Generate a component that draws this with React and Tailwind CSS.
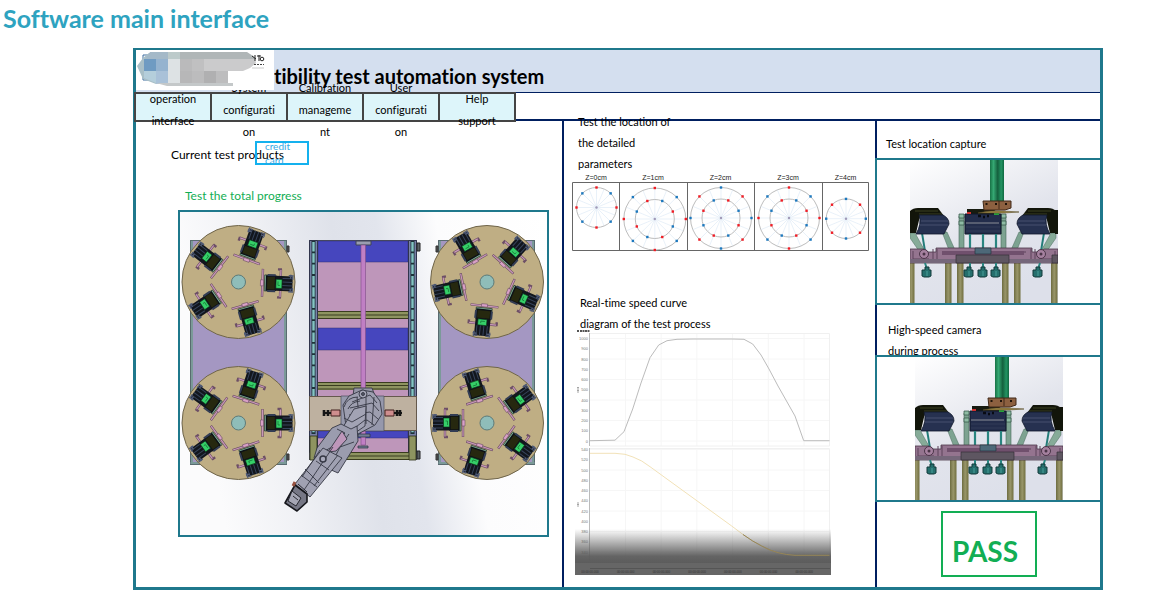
import React from "react";

const menuItems = [
  ["operation", "interface"],
  ["System", "configurati", "on"],
  ["Calibration", "manageme", "nt"],
  ["User", "configurati", "on"],
  ["Help", "support"],
];

const turntables = [
  { x: 238.5, y: 282, offset: 2 },
  { x: 487, y: 282, offset: 24 },
  { x: 238.5, y: 423, offset: 0 },
  { x: 487, y: 423, offset: 36 },
];

const dials = [
  { label: "Z=0cm", labelX: 596, x: 596.5, y: 207.5, rings: [{ r: 20, start: 0, first: "red" }] },
  {
    label: "Z=1cm",
    labelX: 653,
    x: 654.8,
    y: 219,
    rings: [
      { r: 31, start: 0, first: "red" },
      { r: 19.5, start: 22.5, first: "blue" },
    ],
  },
  {
    label: "Z=2cm",
    labelX: 720.5,
    x: 721,
    y: 218,
    rings: [
      { r: 30.5, start: 0, first: "blue" },
      { r: 19, start: 22.5, first: "red" },
    ],
  },
  {
    label: "Z=3cm",
    labelX: 788,
    x: 789,
    y: 218,
    rings: [
      { r: 30.5, start: 0, first: "red" },
      { r: 19, start: 22.5, first: "blue" },
    ],
  },
  { label: "Z=4cm", labelX: 845.5, x: 846, y: 218.7, rings: [{ r: 19.8, start: 0, first: "blue" }] },
];

const polar = (x, y, r, deg) => {
  const rad = (deg * Math.PI) / 180;
  return [x + r * Math.cos(rad), y + r * Math.sin(rad)];
};

const Logo = () => (
  <svg viewBox="136 51 138 40" className="relative z-10 h-10 w-[138px] shrink-0 bg-white">
    <path d="M148 56h-5v5M143 75v6h7" fill="none" stroke="#3d6d9e" />
    <path d="M137 67L143 59L149 54H156V85L143 80Z" fill="#a9bfc7" />
    <path d="M144 60h12v12h-12z" fill="#6f9bc2" />
    <path d="M144 72h12v12l-12-5z" fill="#b4cedb" />
    <path d="M150 53h18v7h-23z" fill="#a4b9c8" />
    <path d="M156 60h12v12h-12z" fill="#95b3cf" />
    <path d="M156 72h12v13h-12z" fill="#a9c1d8" />
    <path d="M168 53h12v7h-12z" fill="#bccaca" />
    <path d="M168 60h12v24h-12z" fill="#dde2e4" />
    <path d="M180 53h67l6 4 2 3h-75z" fill="#b0b6b7" />
    <path d="M180 60h12v12h-12z" fill="#bababb" />
    <path d="M192 60h12v12h-12z" fill="#c0c0c1" />
    <path d="M204 60h51l1 4-6 5-7 3h-39z" fill="#cbcbcc" />
    <path d="M180 72h12v12h-12z" fill="#b7b7b8" />
    <path d="M192 72h12v12h-12z" fill="#bcbcbd" />
    <path d="M204 72h12v12h-12z" fill="#b0b0b1" />
    <path d="M216 72h12v12h-12z" fill="#bdbdbe" />
    <path d="M156 84h77v3h-66z" fill="#c4c8c9" />
    <path d="M252 57l4 3M255 56v6M257 57h4M259 56v6" stroke="#222" fill="none" />
    <circle cx="262" cy="60" r="1.800" stroke="#222" fill="none" />
    <path d="M254 65.500h10" stroke="#444" strokeDasharray="2 1" />
    <path d="M252 69h12" stroke="#ccc" />
  </svg>
);

const Fixture = () => (
  <g>
    <path d="M24 -14V14M42 -14V14M39 -14h4M39 14h4" stroke="#6d4f66" strokeWidth="2.4" />
    <path d="M24 -13.5V13.5M42 -13.5V13.5" stroke="#c898b8" strokeWidth="1.2" />
    <path d="M22 -3h3v6h-3z" fill="#d8a0c6" stroke="#5d4458" strokeWidth=".5" />
    <path d="M26 -8h4v16h-4z" fill="#7fae98" stroke="#23352d" strokeWidth=".7" />
    <path d="M28 -7h9v14h-9z" fill="#26280f" stroke="#0c1016" strokeWidth="1.400" />
    <path d="M29 -8h8M29 8h8" stroke="#333d54" strokeWidth="2" />
    <path d="M37 -7.500h17v15h-17z" fill="#12161d" />
    <path d="M37.500 -4h6v9h-6z" fill="#35cf68" stroke="#0c3218" strokeWidth=".6" />
    <path d="M39.500 -2v4h2" stroke="#136b30" strokeWidth=".7" fill="none" />
    <path d="M44 -5h9M44 -1.500h10M44 2h10M44 5.500h9" stroke="#36435a" strokeWidth="1" />
    <path d="M52 -9v4M54 -7v3M52 9v-4M54 7v-3M50 -8h5M50 8h5" stroke="#4d5874" strokeWidth="1.500" />
  </g>
);

const Turntable = ({ x, y, offset }) => (
  <g>
    <circle cx={x} cy={y} r="56.500" fill="#bfae84" stroke="#6f654b" />
    {[0, 1, 2, 3, 4].map((index) => (
      <g key={index} transform={`translate(${x} ${y}) rotate(${offset + index * 72})`}>
        <Fixture />
      </g>
    ))}
    <circle cx={x} cy={y} r="7" fill="#8fbdb9" stroke="#5c7a78" />
  </g>
);

const Machine = () => (
  <g>
    <rect x="309.500" y="240.500" width="107" height="219" fill="#be96ba" stroke="#4c4e5c" />
    <path d="M318 241h90v21h-90zM318 328h90v22h-90zM318 431h90v7h-90z" fill="#4646be" stroke="#33336f" strokeWidth=".5" />
    <path d="M318 311h90v8h-90zM318 382h90v8h-90zM310 452h106v8h-106z" fill="#8e9460" />
    <path
      d="M318 311.500h90M318 315h90M318 318.500h90M318 382.500h90M318 385.500h90M318 389h90M310 452.500h106M310 456h106M310 459.500h106"
      stroke="#25270f"
      strokeWidth=".8"
    />
    <path d="M309.500 240.500h8v212h-8zM408.500 240.500h8v212h-8z" fill="#777fa6" stroke="#30344c" />
    <path d="M313.500 241v193M412.500 241v193" stroke="#1d3238" strokeWidth="4" />
    <path d="M313.500 242v192M412.500 242v192" stroke="#84c4c4" strokeWidth="2.400" strokeDasharray="9.500 1.800" />
    <path d="M310 436h7v24h-7zM409 436h7v24h-7z" fill="#8e9460" stroke="#2b2d14" strokeWidth=".8" />
    <path d="M417 243h3v8h-3zM417 451h3v8h-3z" fill="#5b6166" stroke="#222" />
    <path d="M356 241h15v4h-15z" fill="#999db0" stroke="#3f4254" />
    <path d="M361 245h4.500v200h-4.500z" fill="#c07fc4" stroke="#7e4c86" strokeWidth=".6" />
    <path d="M309.500 396.500h107v34h-107z" fill="#beb1a0" stroke="#65594c" />
    <path d="M341 396h43v35h-43z" fill="#9698ac" stroke="#4c4e5c" strokeWidth=".7" />
    <path d="M331 410h9v6h-9zM385 410h9v6h-9z" fill="#cf8e8e" stroke="#42211f" />
    <path d="M324 410v6M328 410v6M397 410v6M400 410v6" stroke="#151515" strokeWidth="2.600" />
    <path d="M324 413h7M394 413h8" stroke="#151515" strokeWidth="2" />
    <path d="M358 434h12v3h-12zM358 446h10v2h-10z" fill="#737b96" stroke="#25333a" strokeWidth=".7" />
  </g>
);

const RobotArm = () => (
  <g stroke="#363844" strokeWidth=".9" strokeLinejoin="round">
    <path d="M354 388h18l3 8h-22z" fill="#9596a7" />
    <path d="M343 405l6-9 13-6 11 2 7 9 2 13-7 11-17 9-12-8z" fill="#9d9eaf" />
    <path d="M344 407q3-10 14-10M348 409q3-7 12-8" fill="none" />
    <path d="M352 402l18-7 7 8M350 408l22-5 7 8M349 415l21-3 8 7M354 424l13-4 7 5" fill="none" />
    <path d="M366 394v30M374 397l-2 28M357 397l3 29" fill="none" />
    <circle cx="363" cy="394" r="4" fill="#a4a5b5" />
    <circle cx="363" cy="394" r="1.500" fill="#555868" />
    <path d="M354 409l12-3-1 20-13 9-12-3z" fill="#a2a3b4" />
    <path d="M344 418l8 4 14-8M344 427l8 3 13-10" fill="none" />
    <path d="M332 428l9-4 10 5 6-3 1 15-20 32-9-4 5-12-13 7-7-6 3-10z" fill="#9b9cae" />
    <path d="M337 429l8 4-13 14-11 6M349 434l-9 13 14-5M340 447l-9 18" fill="none" />
    <path d="M342 431l5 8-11 12-8 1z" fill="#be96ba" />
    <path d="M323 448l19 10-32 39-15-13z" fill="#a0a1b2" />
    <path d="M333 447l-29 43M316 461l13 9M305 469l14 14M338 455l-24 31M320 450l-18 27M301 475l16 12" fill="none" />
    <circle cx="323" cy="459" r="3" fill="#a9aabb" strokeWidth="1.500" />
    <path d="M295 485l12 9v8l-10 9-12-8z" fill="#767785" stroke="#15161b" strokeWidth="1.600" />
    <path d="M292 491l9 7-5 8-8-5zM298 484l9 8M293 496l5 4" fill="#a5a6b4" stroke="#1b1c22" />
    <path d="M295 482l-2 4" stroke="#96503f" strokeWidth="3" />
  </g>
);

const ProgressDrawing = () => (
  <svg viewBox="180 212 367 323" className="block w-full">
    <defs>
      <linearGradient id="floor" x1="0" y1="0.15" x2="1" y2="0">
        <stop offset="0" stopColor="#fbfbfc" />
        <stop offset=".2" stopColor="#f0f1f5" />
        <stop offset=".42" stopColor="#dfe2ea" />
        <stop offset=".54" stopColor="#e2e5ed" />
        <stop offset=".7" stopColor="#fcfcfd" />
        <stop offset="1" stopColor="#ffffff" />
      </linearGradient>
    </defs>
    <rect x="180" y="212" width="367" height="323" fill="url(#floor)" />
    {[190.5, 438.5].map((x) => (
      <g key={x}>
        <rect x={x} y="240.500" width="96" height="224" fill="#a497c2" stroke="#596b70" />
        <path d={`M${x + 1.500} 241v223M${x + 94.500} 241v223M${x} 463h96`} stroke="#7b9a99" strokeWidth="2" />
      </g>
    ))}
    <path d="M287 246h2v6h-2zM287 454h2v6h-2zM436 246h2v6h-2zM436 454h2v6h-2z" fill="#555" stroke="#333" />
    <Machine />
    {turntables.map((table) => (
      <Turntable key={`${table.x}-${table.y}`} {...table} />
    ))}
    <RobotArm />
  </svg>
);

const Dial = ({ x, y, rings }) => (
  <g>
    {Array.from({ length: 16 }).map((_, index) => {
      const [endX, endY] = polar(x, y, rings[0].r, index * 22.5);
      return <line key={index} x1={x} y1={y} x2={endX} y2={endY} stroke="#e3eef8" strokeWidth=".8" />;
    })}
    {rings.map((ring) => (
      <g key={ring.r}>
        <circle cx={x} cy={y} r={ring.r} fill="none" stroke="#bdbdbd" />
        {Array.from({ length: 8 }).map((_, index) => {
          const [dotX, dotY] = polar(x, y, ring.r, ring.start - 90 + index * 45);
          const isRed = (index % 2 === 0) === (ring.first === "red");
          return (
            <rect
              key={index}
              x={dotX - 1.2}
              y={dotY - 1.2}
              width="2.400"
              height="2.400"
              fill={isRed ? "#f01c24" : "#1c78be"}
            />
          );
        })}
      </g>
    ))}
    <circle cx={x} cy={y} r="1.200" fill="#a09ab8" />
  </g>
);

const LocationDials = () => (
  <svg viewBox="572 172 298 80" className="block w-full">
    <path
      d="M572.500 182.500h296v68h-296zM619.500 182v69M687.500 182v69M754.500 182v69M822.500 182v69"
      fill="none"
      stroke="#666"
    />
    {dials.map((dial) => (
      <g key={dial.label}>
        <text x={dial.labelX} y="180" textAnchor="middle" fill="#222" className="font-['Liberation_Sans'] text-[7px]">
          {dial.label}
        </text>
        <Dial {...dial} />
      </g>
    ))}
  </svg>
);

const SpeedChart = () => (
  <svg viewBox="575 328 256 247" className="block w-full font-['Liberation_Sans'] text-[4px]">
    <defs>
      <linearGradient id="shade" x1="0" y1="0" x2="0" y2="1">
        <stop offset="0" stopColor="#5c5c5c" stopOpacity="0" />
        <stop offset=".3" stopColor="#5c5c5c" stopOpacity=".35" />
        <stop offset=".8" stopColor="#5c5c5c" stopOpacity=".95" />
        <stop offset="1" stopColor="#5c5c5c" />
      </linearGradient>
    </defs>
    <path d="M577 331h2M580 331h10" stroke="#555" strokeWidth="2" strokeDasharray="2 .5" />
    {Array.from({ length: 11 }).map((_, index) => (
      <g key={index} fill="#777" textAnchor="end">
        <text x="588" y={340 + index * 10.25}>{1000 - index * 100}</text>
        <text x="588" y={451 + index * 10.25}>{540 - index * 20}</text>
        {index % 2 === 0 && (
          <path
            d={`M590 ${338.5 + index * 10.25}h240M590 ${449.5 + index * 10.25}h240`}
            stroke="#f6f6f6"
          />
        )}
      </g>
    ))}
    {Array.from({ length: 6 }).map((_, index) => (
      <path key={index} d={`M${625.5 + index * 35.7} 334v112M${625.5 + index * 35.7} 449v111`} stroke="#f6f6f6" />
    ))}
    <path d="M590 333.500h239.500v112.500h-239.500M590 448.500h239.500v112h-239.500" fill="none" stroke="#f0f0f0" />
    <path d="M589.500 333v113M589.500 448v113" stroke="#bbb" />
    <path d="M578 387v6M578 502.500v4" stroke="#888" strokeWidth="1.500" strokeDasharray="1 .5" />
    <path
      d="M590 440.700L615 440.200L624 431.700L632.700 409L641 383L650 357.700L658.700 345L667 340.700L677 339.300L693 339H732L744 339.300L752.700 344L761 355L769 369L778 386L795 416L803.700 440.700H829.500"
      fill="none"
      stroke="#bcbcbc"
    />
    <path
      d="M590 453.300H615L625 454.300L633 457L641.700 461L650 466.700L731.700 526L743 534.500L752.700 541L761.700 546L770 550L778 552.700L786.700 554.500L795 555.300H829.500"
      fill="none"
      stroke="#f2e2b8"
    />
    <rect x="575" y="529" width="256" height="34" fill="url(#shade)" />
    <rect x="575" y="563" width="256" height="12" fill="#666" />
    <path d="M743 534.500L752.700 541L761.700 546L770 550L778 552.700L786.700 554.500L795 555.300H829.500" fill="none" stroke="#978657" />
    <path d="M590 568.500h240" stroke="#555" />
    {Array.from({ length: 7 }).map((_, index) => (
      <text key={index} x={590 + index * 35.7} y="573" textAnchor="middle" fill="#333" className="text-[3px]">
        00:00:00.000
      </text>
    ))}
  </svg>
);

const SideReader = () => (
  <g>
    <path d="M32 72h5l8 18h-6z" fill="#7da391" stroke="#4b6b5c" strokeWidth=".5" />
    <path d="M0 73h5l10 18h-6L0 78z" fill="#86ab98" stroke="#4b6b5c" strokeWidth=".5" />
    <path d="M11 73h2l3 18h-2z" fill="#237c78" />
    <path d="M0 51q3-3 8-3h20l6 8H10L6 73H0z" fill="#12150a" />
    <path d="M5 51h23M9 54h23" stroke="#3a4020" />
    <path d="M9 55h24q6 3 6 9l-5 10H6q6-10 3-19z" fill="#263150" stroke="#10182b" strokeWidth=".8" />
    <path d="M11 61h27M10 65h28" stroke="#46506e" strokeWidth="1.200" />
  </g>
);

const CameraView = ({ id }) => (
  <svg viewBox="0 0 148 143" className="block w-[148px]">
    <defs>
      <linearGradient id={`${id}-wall`} x1="0" y1="0" x2=".5" y2="1">
        <stop offset="0" stopColor="#fff" />
        <stop offset=".6" stopColor="#e2e4ec" />
        <stop offset="1" stopColor="#dde0ea" />
      </linearGradient>
      <linearGradient id={`${id}-pipe`}>
        <stop offset="0" stopColor="#177245" />
        <stop offset=".25" stopColor="#35a873" />
        <stop offset=".55" stopColor="#14603d" />
        <stop offset=".8" stopColor="#239463" />
        <stop offset="1" stopColor="#0f6840" />
      </linearGradient>
      <linearGradient id={`${id}-post`}>
        <stop offset="0" stopColor="#6d6c40" />
        <stop offset=".5" stopColor="#99966a" />
        <stop offset="1" stopColor="#706e3e" />
      </linearGradient>
    </defs>
    <rect width="148" height="143" fill={`url(#${id}-wall)`} />
    {[-2, 35, 47, 92, 104, 141].map((x) => (
      <rect key={x} x={x} y="101" width="6.500" height="42" fill={`url(#${id}-post)`} />
    ))}
    <SideReader />
    <g transform="translate(146 0) scale(-1 1)">
      <SideReader />
    </g>
    <path d="M145 50h3v24h-3z" fill="#12150a" />
    <path d="M49 56h5v36h-5zM91 56h5v36h-5z" fill="#7da391" stroke="#46695a" strokeWidth=".6" />
    <path d="M49 54h5v4h-5zM49 61h5v4h-5zM91 54h5v4h-5zM91 61h5v4h-5z" fill="#8fbca5" stroke="#2f5142" strokeWidth=".7" />
    <path d="M57 49h26l8 6H57z" fill="#171b10" />
    <path d="M55 54h36v20H55z" fill="#232d4b" stroke="#10182b" />
    <path d="M56 63h33" stroke="#8c8f97" />
    <path d="M56 67h34M56 71h34" stroke="#394360" strokeWidth=".7" />
    <path d="M68 56h3M73 57h2M77 56h2" stroke="#080b12" strokeWidth="2.400" />
    <path d="M57 53h4" stroke="#d03030" strokeWidth="2" />
    <path d="M84 54h5" stroke="#27a03c" strokeWidth="2" />
    <path d="M68 53q12-3 25-2l16 1-15 1z" fill="#a08a48" stroke="#584c27" strokeWidth=".6" />
    <path d="M80 0h14v43H80z" fill={`url(#${id}-pipe)`} />
    <path d="M73 41h28v7l-6 2H74z" fill="#8c6040" stroke="#412918" />
    <path d="M89 41v8" stroke="#412918" />
    <path d="M75.500 44h2M85 44h2M95 44h2" stroke="#20140b" strokeWidth="2" />
    <path d="M60 74v16M73 74v16M86 74v16" stroke="#2a8580" strokeWidth="2.200" />
    <path d="M0 89h14l4 3h8v-4h96v4h8l4-3h14v14H0z" fill="#94748f" stroke="#4a3548" strokeWidth=".8" />
    <path d="M3 91v8h16M23 89v12M27 89v12M32 92h84M121 89v12M125 89v12M145 91v8h-16" stroke="#5d435a" fill="none" />
    <path d="M32 91h82v4H32z" fill="#70506d" />
    <path d="M0 99h148v4H0z" fill="#75677a" />
    <circle cx="14" cy="94" r="4.500" fill="#a5819f" stroke="#4a3548" />
    <circle cx="14" cy="94" r="1.500" fill="#4a3548" />
    <circle cx="131" cy="94" r="4.500" fill="#a5819f" stroke="#4a3548" />
    <circle cx="131" cy="94" r="1.500" fill="#4a3548" />
    <path d="M46 95h53v8H46zM142 95h6v8h-6z" fill="#5e5661" stroke="#352f38" strokeWidth=".7" />
    <path d="M65 88h16v6H65z" fill="#4d6878" stroke="#27353e" strokeWidth=".7" />
    <path d="M60 103v8M73 103v6M86 103v8M15 103l2 6M130 103l-2 6" stroke="#2a8580" strokeWidth="2" />
    {[17, 59, 73, 86, 128].map((x) => (
      <g key={x}>
        <path d={`M${x - 2} 107h4v3h2v6l-2 1h-5l-2-1v-6h3z`} fill="#256f6d" stroke="#123a3a" />
        <path d={`M${x} 111v5`} stroke="#49a09a" />
      </g>
    ))}
  </svg>
);

const App = () => {
  return (
    <div className="min-h-[600px] bg-white pb-[11px] font-['Lato',sans-serif] text-[11px] leading-[22px] text-black [font-variant-ligatures:none]">
      <h1 className="h-12 pl-[3px] pt-[3px] text-[25px] font-bold leading-[30px] text-[#2ea3c0]">
        Software main interface
      </h1>

      <main className="ml-[133px] mr-[61px] border-x-3 border-b-3 border-t-2 border-[#1f788c]">
        <header className="flex h-[42px] items-start bg-[#d4dfef]">
          <Logo />
          <h2 className="pt-3 text-[20px] font-bold leading-[28px]">tibility test automation system</h2>
        </header>

        <div className="h-[29px] border-b-2 border-t border-[#001f60]">
          <nav className="-ml-[2px] -mt-px flex w-[382px] border border-[#444]">
            {menuItems.map((lines) => (
              <button
                key={lines.join(" ")}
                type="button"
                className="flex h-7 flex-1 flex-col items-center justify-center border border-[#444] bg-[#ddf5fa] pt-[6px]"
              >
                {lines.map((line) => (
                  <span key={line}>{line}</span>
                ))}
              </button>
            ))}
          </nav>
        </div>

        <div className="grid grid-cols-[426fr_313fr_225fr]">
          <section className="pl-[42px] pr-[13px] pt-5">
            <div className="-ml-[7px] flex h-6 items-center">
              <label htmlFor="product" className="shrink-0 pt-1 text-[12px]">
                Current test products
              </label>
              <button
                id="product"
                type="button"
                className="-ml-[29px] flex h-6 w-[54px] flex-col justify-center border-2 border-[#14b1ee] pl-2 text-left text-[10px] leading-[14px] text-[#35a8e4]"
              >
                <span>credit</span>
                <span>card</span>
              </button>
            </div>
            <h3 className="mt-5 pl-[7px] text-[12px] text-[#12ae54]">Test the total progress</h3>
            <div className="mt-[3px] border-2 border-[#1f788c]">
              <ProgressDrawing />
            </div>
          </section>

          <section className="border-l-2 border-[#001f60] pl-2">
            <h3 className="-mt-[10px] h-[61px] w-28 pl-[6px] leading-[21px]">
              Test the location of the detailed parameters
            </h3>
            <div className="w-[298px] max-w-full">
              <LocationDials />
            </div>
            <h3 className="mt-10 h-9 w-[150px] pl-2 leading-[21px]">
              Real-time speed curve diagram of the test process
            </h3>
            <div className="ml-[3px] w-64 max-w-full">
              <SpeedChart />
            </div>
          </section>

          <section className="flex flex-col border-l-2 border-[#001f60]">
            <h3 className="h-[37px] pl-[9px] pt-3">Test location capture</h3>
            <div className="-ml-[2px] border-y-2 border-l-2 border-[#1f788c] pl-[33px]">
              <CameraView id="capture" />
            </div>
            <h3 className="h-[50px] w-32 pl-[11px] pt-[14px] leading-[21px]">High-speed camera during process</h3>
            <div className="-ml-[2px] border-y-2 border-l-2 border-[#1f788c] pl-[38px]">
              <CameraView id="process" />
            </div>
            <div className="pb-[10px] pl-16 pt-[9px]">
              <output className="flex h-[66px] w-24 items-end border-2 border-[#12ae54] pb-1 pl-[9px] text-[28px] font-bold leading-[40px] text-[#12ae54]">
                PASS
              </output>
            </div>
          </section>
        </div>
      </main>
    </div>
  );
};

export default App;
